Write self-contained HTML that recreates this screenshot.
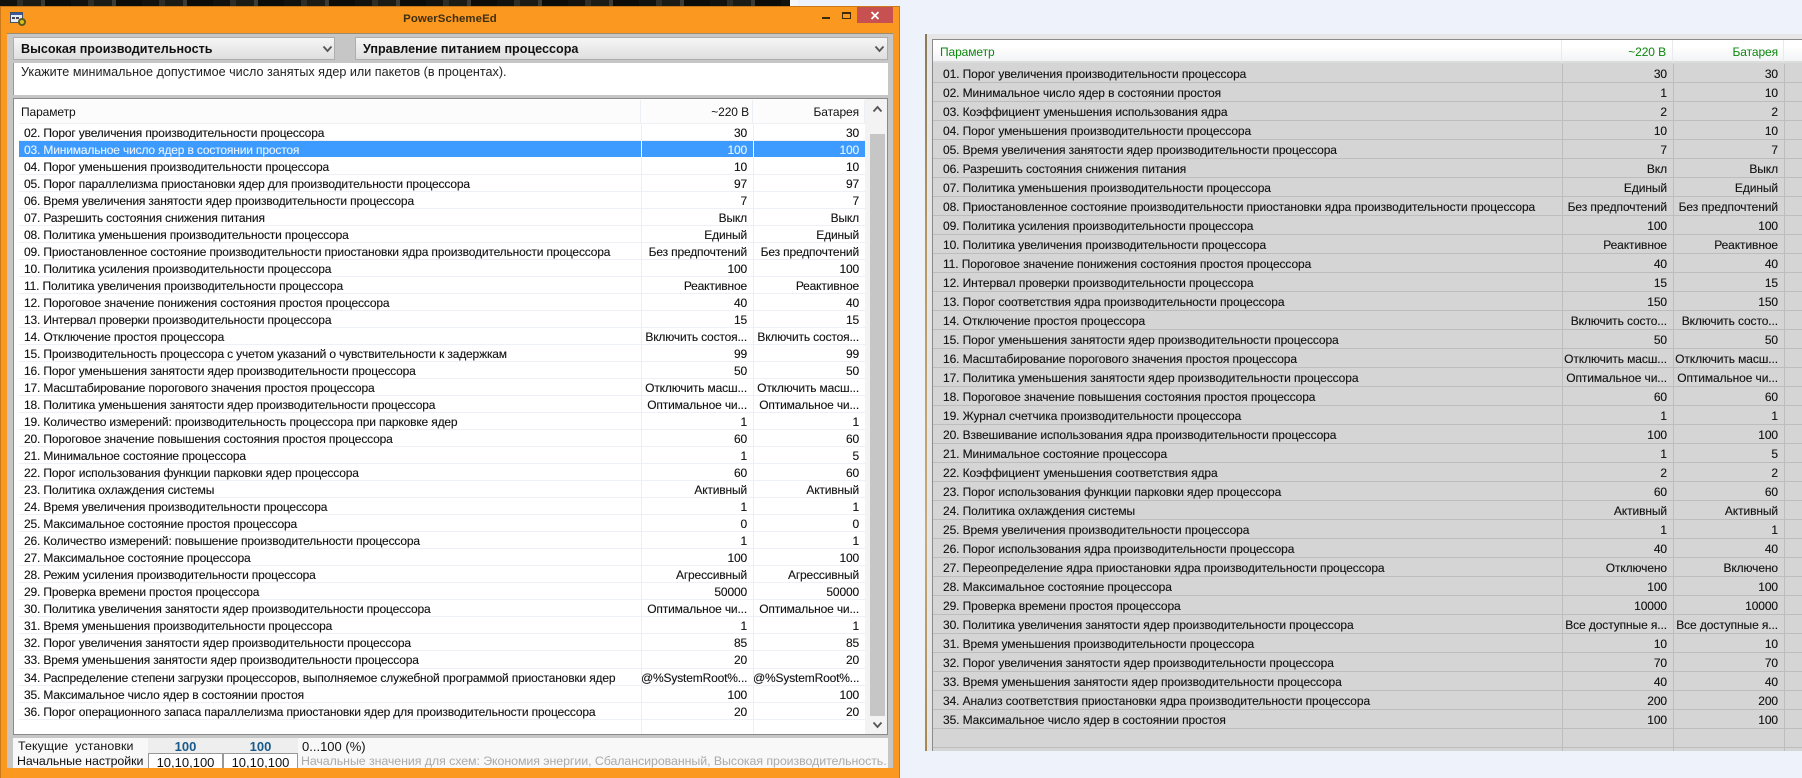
<!DOCTYPE html>
<html lang="ru"><head><meta charset="utf-8"><title>PowerSchemeEd</title>
<style>
html,body{margin:0;padding:0}
body{width:1802px;height:778px;overflow:hidden;position:relative;background:#eef2fa;font-family:"Liberation Sans",sans-serif;font-size:12px;color:#111}
div,span{box-sizing:border-box}
.a{position:absolute}
#top{left:0;top:0;width:790px;height:7px;background:repeating-linear-gradient(90deg,#12120e 0 17px,#2e2e26 17px 23px,#1c1c16 23px 41px,#3c3c34 41px 45px,#0c0c09 45px 71px)}
#topw{left:790px;top:0;width:8px;height:7px;background:#f6f7fa}
#win{left:0;top:6px;width:900px;height:772px;background:#fb981f;border:1px solid #c97a18;border-bottom:0}
#client{left:7px;top:33px;width:886px;height:735px;background:#c6c6c6;border-top:1px solid #9a8a70}
.title{left:350px;top:13px;width:200px;text-align:center;font-weight:bold;font-size:11.4px;letter-spacing:.1px;color:#3e2f14}
.combo{top:37px;height:23px;background:linear-gradient(#f6f6f6,#dfdfdf);border:1px solid #adadad;font-weight:bold;font-size:12.6px;line-height:23px;padding-left:7px;color:#111}
#desc{left:13px;top:63px;width:875px;height:32px;background:#fff;border-left:1px solid #999;padding:2px 0 0 7px;font-size:12.6px;line-height:15px;color:#222}
#list{left:13px;top:98px;width:875px;height:637px;background:#fff;border:1px solid #8a8a8a}
#lh{left:19px;top:100px;width:846px;height:24px;background:#fcfcfc;border-bottom:1px solid #eef0f4;line-height:24px;letter-spacing:-.1px}
.hs{top:100px;width:1px;height:24px;background:#eceff3}
#lr{left:19px;top:124px;width:846px}
.r{display:flex;height:17.03px;line-height:16px;border-bottom:1px solid #edf0f4;white-space:nowrap;letter-spacing:-.16px;-webkit-text-stroke:.12px}
.r span{display:block;position:relative;top:1px}
.r .n{width:622px;padding-left:5px}
.r .v{width:112px;text-align:right;padding-right:6px}
.r.s{background:#3d9bff;color:#e8f3ff;border-bottom-color:#fff}
.ls{top:124px;width:1px;height:610px;background:#eceff3}
.lsw{top:141px;width:1px;height:16px;background:#fff}
#sb{left:865px;top:99px;width:22px;height:635px;background:#f3f3f3}
#th{left:870px;top:134px;width:15px;height:582px;background:#c6c6c6}
#bot{left:13px;top:738px;width:875px;height:30px;background:#f8f8f8}
.cell{width:75px;height:15px;text-align:center;line-height:17px;font-size:13px;overflow:hidden}
.lab{left:18px;font-size:12.4px;line-height:15px;white-space:nowrap}
#pstrip{left:925px;top:34px;width:2px;height:717px;background:linear-gradient(#8a7a5a,#b89860 30%,#c8a878 70%,#a88850)}
#pan{left:927px;top:34px;width:875px;height:717px;background:#e6e6e6}
#rlist{left:932px;top:39px;width:870px;height:712px;background:#d5d5d5;border-left:1px solid #8a8a8a;border-top:1px solid #8a8a8a}
#rh{left:933px;top:40px;width:869px;height:23px;background:linear-gradient(#fff 30%,#f3f4f6);border-bottom:2px solid #dcdcdc;color:#0c860c;line-height:23px;letter-spacing:-.1px}
#rh span{position:absolute;top:1px;white-space:nowrap}
.rhs{top:40px;width:1px;height:22px;background:#e8eaee}
#rr{left:933px;top:64px;width:869px}
.q{display:flex;height:19px;line-height:19px;border-bottom:1px solid #bdbdbd;white-space:nowrap;color:#111;font-size:12px;letter-spacing:-.1px;-webkit-text-stroke:.12px}
.q span{display:block;position:relative;top:1px}
.q .n{width:629px;padding-left:10px}
.q .v{width:111px;text-align:right;padding-right:6px}
.rs{top:64px;width:1px;height:687px;background:#bdbdbd}
</style></head><body>
<div class="a" id="top"></div><div class="a" id="topw"></div>
<div class="a" id="win"></div>
<svg class="a" style="left:10px;top:12px" width="17" height="15" viewBox="0 0 17 15"><rect x=".5" y=".5" width="12" height="10" fill="#e8ecf4" stroke="#44506a"/><rect x="1" y="1" width="11" height="2" fill="#3a5aa0"/><rect x="2" y="5" width="3" height="2" fill="#445"/><rect x="6" y="5" width="3" height="2" fill="#445"/><circle cx="12" cy="10" r="4" fill="#5a5a20"/><circle cx="12" cy="10" r="2" fill="#d8c020"/></svg>
<div class="a title">PowerSchemeEd</div>
<div class="a" style="left:822px;top:17px;width:8px;height:2px;background:#3e2a08"></div>
<div class="a" style="left:842px;top:12px;width:9px;height:7px;border:1px solid #3e2a08;border-top-width:2px"></div>
<div class="a" style="left:857px;top:7px;width:36px;height:16px;background:#c75050"></div>
<svg class="a" style="left:870px;top:11px" width="10" height="9" viewBox="0 0 10 9"><path d="M1.5 1 8.5 8M8.5 1 1.5 8" stroke="#fff" stroke-width="1.8"/></svg>
<div class="a" id="client"></div>
<div class="a combo" style="left:13px;width:322px">Высокая производительность</div>
<div class="a combo" style="left:355px;width:533px">Управление питанием процессора</div>
<svg class="a" style="left:322px;top:45px" width="11" height="8" viewBox="0 0 11 8"><path d="M1.5 1.5 5.5 6 9.5 1.5" fill="none" stroke="#555" stroke-width="1.8"/></svg>
<svg class="a" style="left:874px;top:45px" width="11" height="8" viewBox="0 0 11 8"><path d="M1.5 1.5 5.5 6 9.5 1.5" fill="none" stroke="#555" stroke-width="1.8"/></svg>
<div class="a" id="desc">Укажите минимальное допустимое число занятых ядер или пакетов (в процентах).</div>
<div class="a" id="list"></div>
<div class="a" id="lh"><span class="a" style="left:2px">Параметр</span><span class="a" style="right:116px">~220 В</span><span class="a" style="right:6px">Батарея</span></div>
<div class="a hs" style="left:640px"></div><div class="a hs" style="left:752px"></div><div class="a hs" style="left:864px"></div>
<div class="a" id="lr">
<div class="r"><span class="n">02. Порог увеличения производительности процессора</span><span class="v">30</span><span class="v">30</span></div>
<div class="r s"><span class="n">03. Минимальное число ядер в состоянии простоя</span><span class="v">100</span><span class="v">100</span></div>
<div class="r"><span class="n">04. Порог уменьшения производительности процессора</span><span class="v">10</span><span class="v">10</span></div>
<div class="r"><span class="n">05. Порог параллелизма приостановки ядер для производительности процессора</span><span class="v">97</span><span class="v">97</span></div>
<div class="r"><span class="n">06. Время увеличения занятости ядер производительности процессора</span><span class="v">7</span><span class="v">7</span></div>
<div class="r"><span class="n">07. Разрешить состояния снижения питания</span><span class="v">Выкл</span><span class="v">Выкл</span></div>
<div class="r"><span class="n">08. Политика уменьшения производительности процессора</span><span class="v">Единый</span><span class="v">Единый</span></div>
<div class="r"><span class="n">09. Приостановленное состояние производительности приостановки ядра производительности процессора</span><span class="v">Без предпочтений</span><span class="v">Без предпочтений</span></div>
<div class="r"><span class="n">10. Политика усиления производительности процессора</span><span class="v">100</span><span class="v">100</span></div>
<div class="r"><span class="n">11. Политика увеличения производительности процессора</span><span class="v">Реактивное</span><span class="v">Реактивное</span></div>
<div class="r"><span class="n">12. Пороговое значение понижения состояния простоя процессора</span><span class="v">40</span><span class="v">40</span></div>
<div class="r"><span class="n">13. Интервал проверки производительности процессора</span><span class="v">15</span><span class="v">15</span></div>
<div class="r"><span class="n">14. Отключение простоя процессора</span><span class="v">Включить состоя...</span><span class="v">Включить состоя...</span></div>
<div class="r"><span class="n">15. Производительность процессора с учетом указаний о чувствительности к задержкам</span><span class="v">99</span><span class="v">99</span></div>
<div class="r"><span class="n">16. Порог уменьшения занятости ядер производительности процессора</span><span class="v">50</span><span class="v">50</span></div>
<div class="r"><span class="n">17. Масштабирование порогового значения простоя процессора</span><span class="v">Отключить масш...</span><span class="v">Отключить масш...</span></div>
<div class="r"><span class="n">18. Политика уменьшения занятости ядер производительности процессора</span><span class="v">Оптимальное чи...</span><span class="v">Оптимальное чи...</span></div>
<div class="r"><span class="n">19. Количество измерений: производительность процессора при парковке ядер</span><span class="v">1</span><span class="v">1</span></div>
<div class="r"><span class="n">20. Пороговое значение повышения состояния простоя процессора</span><span class="v">60</span><span class="v">60</span></div>
<div class="r"><span class="n">21. Минимальное состояние процессора</span><span class="v">1</span><span class="v">5</span></div>
<div class="r"><span class="n">22. Порог использования функции парковки ядер процессора</span><span class="v">60</span><span class="v">60</span></div>
<div class="r"><span class="n">23. Политика охлаждения системы</span><span class="v">Активный</span><span class="v">Активный</span></div>
<div class="r"><span class="n">24. Время увеличения производительности процессора</span><span class="v">1</span><span class="v">1</span></div>
<div class="r"><span class="n">25. Максимальное состояние простоя процессора</span><span class="v">0</span><span class="v">0</span></div>
<div class="r"><span class="n">26. Количество измерений: повышение производительности процессора</span><span class="v">1</span><span class="v">1</span></div>
<div class="r"><span class="n">27. Максимальное состояние процессора</span><span class="v">100</span><span class="v">100</span></div>
<div class="r"><span class="n">28. Режим усиления производительности процессора</span><span class="v">Агрессивный</span><span class="v">Агрессивный</span></div>
<div class="r"><span class="n">29. Проверка времени простоя процессора</span><span class="v">50000</span><span class="v">50000</span></div>
<div class="r"><span class="n">30. Политика увеличения занятости ядер производительности процессора</span><span class="v">Оптимальное чи...</span><span class="v">Оптимальное чи...</span></div>
<div class="r"><span class="n">31. Время уменьшения производительности процессора</span><span class="v">1</span><span class="v">1</span></div>
<div class="r"><span class="n">32. Порог увеличения занятости ядер производительности процессора</span><span class="v">85</span><span class="v">85</span></div>
<div class="r"><span class="n">33. Время уменьшения занятости ядер производительности процессора</span><span class="v">20</span><span class="v">20</span></div>
<div class="r"><span class="n">34. Распределение степени загрузки процессоров, выполняемое служебной программой приостановки ядер</span><span class="v">@%SystemRoot%...</span><span class="v">@%SystemRoot%...</span></div>
<div class="r"><span class="n">35. Максимальное число ядер в состоянии простоя</span><span class="v">100</span><span class="v">100</span></div>
<div class="r"><span class="n">36. Порог операционного запаса параллелизма приостановки ядер для производительности процессора</span><span class="v">20</span><span class="v">20</span></div>
</div>
<div class="a ls" style="left:641px"></div><div class="a ls" style="left:753px"></div><div class="a ls" style="left:865px"></div>
<div class="a lsw" style="left:641px"></div><div class="a lsw" style="left:753px"></div>
<div class="a" id="sb"></div><div class="a" id="th"></div>
<svg class="a" style="left:872px;top:105px" width="11" height="8" viewBox="0 0 11 8"><path d="M1.5 6.5 5.5 2 9.5 6.5" fill="none" stroke="#555" stroke-width="1.8"/></svg>
<svg class="a" style="left:872px;top:721px" width="11" height="8" viewBox="0 0 11 8"><path d="M1.5 1.5 5.5 6 9.5 1.5" fill="none" stroke="#555" stroke-width="1.8"/></svg>
<div class="a" id="bot"></div>
<div class="a lab" style="top:739px;letter-spacing:.1px">Текущие&nbsp; установки</div>
<div class="a lab" style="left:17px;top:754px;letter-spacing:-.05px">Начальные настройки</div>
<div class="a cell" style="left:148px;top:738px;background:#eeeeee;color:#1a5a8a;font-weight:bold">100</div>
<div class="a cell" style="left:223px;top:738px;background:#eeeeee;color:#1a5a8a;font-weight:bold">100</div>
<div class="a cell" style="left:148px;top:753px;background:#fff;border:1px solid #999;border-bottom:0">10,10,100</div>
<div class="a cell" style="left:223px;top:753px;background:#fff;border:1px solid #999;border-bottom:0">10,10,100</div>
<div class="a lab" style="left:302px;top:739px;font-size:13px">0...100 (%)</div>
<div class="a lab" style="left:301px;top:754px;color:#aaaaaa;font-size:12.4px;letter-spacing:-.07px">Начальные значения для схем: Экономия энергии, Сбалансированный, Высокая производительность.</div>
<div class="a" id="pan"></div><div class="a" id="pstrip"></div>
<div class="a" id="rlist"></div>
<div class="a" id="rh"><span style="left:7px">Параметр</span><span style="right:136px">~220 В</span><span style="right:24px">Батарея</span></div>
<div class="a rhs" style="left:1561px"></div><div class="a rhs" style="left:1672px"></div><div class="a rhs" style="left:1783px"></div>
<div class="a" id="rr">
<div class="q"><span class="n">01. Порог увеличения производительности процессора</span><span class="v">30</span><span class="v">30</span></div>
<div class="q"><span class="n">02. Минимальное число ядер в состоянии простоя</span><span class="v">1</span><span class="v">10</span></div>
<div class="q"><span class="n">03. Коэффициент уменьшения использования ядра</span><span class="v">2</span><span class="v">2</span></div>
<div class="q"><span class="n">04. Порог уменьшения производительности процессора</span><span class="v">10</span><span class="v">10</span></div>
<div class="q"><span class="n">05. Время увеличения занятости ядер производительности процессора</span><span class="v">7</span><span class="v">7</span></div>
<div class="q"><span class="n">06. Разрешить состояния снижения питания</span><span class="v">Вкл</span><span class="v">Выкл</span></div>
<div class="q"><span class="n">07. Политика уменьшения производительности процессора</span><span class="v">Единый</span><span class="v">Единый</span></div>
<div class="q"><span class="n">08. Приостановленное состояние производительности приостановки ядра производительности процессора</span><span class="v">Без предпочтений</span><span class="v">Без предпочтений</span></div>
<div class="q"><span class="n">09. Политика усиления производительности процессора</span><span class="v">100</span><span class="v">100</span></div>
<div class="q"><span class="n">10. Политика увеличения производительности процессора</span><span class="v">Реактивное</span><span class="v">Реактивное</span></div>
<div class="q"><span class="n">11. Пороговое значение понижения состояния простоя процессора</span><span class="v">40</span><span class="v">40</span></div>
<div class="q"><span class="n">12. Интервал проверки производительности процессора</span><span class="v">15</span><span class="v">15</span></div>
<div class="q"><span class="n">13. Порог соответствия ядра производительности процессора</span><span class="v">150</span><span class="v">150</span></div>
<div class="q"><span class="n">14. Отключение простоя процессора</span><span class="v">Включить состо...</span><span class="v">Включить состо...</span></div>
<div class="q"><span class="n">15. Порог уменьшения занятости ядер производительности процессора</span><span class="v">50</span><span class="v">50</span></div>
<div class="q"><span class="n">16. Масштабирование порогового значения простоя процессора</span><span class="v">Отключить масш...</span><span class="v">Отключить масш...</span></div>
<div class="q"><span class="n">17. Политика уменьшения занятости ядер производительности процессора</span><span class="v">Оптимальное чи...</span><span class="v">Оптимальное чи...</span></div>
<div class="q"><span class="n">18. Пороговое значение повышения состояния простоя процессора</span><span class="v">60</span><span class="v">60</span></div>
<div class="q"><span class="n">19. Журнал счетчика производительности процессора</span><span class="v">1</span><span class="v">1</span></div>
<div class="q"><span class="n">20. Взвешивание использования ядра производительности процессора</span><span class="v">100</span><span class="v">100</span></div>
<div class="q"><span class="n">21. Минимальное состояние процессора</span><span class="v">1</span><span class="v">5</span></div>
<div class="q"><span class="n">22. Коэффициент уменьшения соответствия ядра</span><span class="v">2</span><span class="v">2</span></div>
<div class="q"><span class="n">23. Порог использования функции парковки ядер процессора</span><span class="v">60</span><span class="v">60</span></div>
<div class="q"><span class="n">24. Политика охлаждения системы</span><span class="v">Активный</span><span class="v">Активный</span></div>
<div class="q"><span class="n">25. Время увеличения производительности процессора</span><span class="v">1</span><span class="v">1</span></div>
<div class="q"><span class="n">26. Порог использования ядра производительности процессора</span><span class="v">40</span><span class="v">40</span></div>
<div class="q"><span class="n">27. Переопределение ядра приостановки ядра производительности процессора</span><span class="v">Отключено</span><span class="v">Включено</span></div>
<div class="q"><span class="n">28. Максимальное состояние процессора</span><span class="v">100</span><span class="v">100</span></div>
<div class="q"><span class="n">29. Проверка времени простоя процессора</span><span class="v">10000</span><span class="v">10000</span></div>
<div class="q"><span class="n">30. Политика увеличения занятости ядер производительности процессора</span><span class="v">Все доступные я...</span><span class="v">Все доступные я...</span></div>
<div class="q"><span class="n">31. Время уменьшения производительности процессора</span><span class="v">10</span><span class="v">10</span></div>
<div class="q"><span class="n">32. Порог увеличения занятости ядер производительности процессора</span><span class="v">70</span><span class="v">70</span></div>
<div class="q"><span class="n">33. Время уменьшения занятости ядер производительности процессора</span><span class="v">40</span><span class="v">40</span></div>
<div class="q"><span class="n">34. Анализ соответствия приостановки ядра производительности процессора</span><span class="v">200</span><span class="v">200</span></div>
<div class="q"><span class="n">35. Максимальное число ядер в состоянии простоя</span><span class="v">100</span><span class="v">100</span></div>
<div class="q"><span class="n">&nbsp;</span><span class="v"></span><span class="v"></span></div>
</div>
<div class="a rs" style="left:1562px"></div><div class="a rs" style="left:1673px"></div><div class="a rs" style="left:1784px"></div>
</body></html>
